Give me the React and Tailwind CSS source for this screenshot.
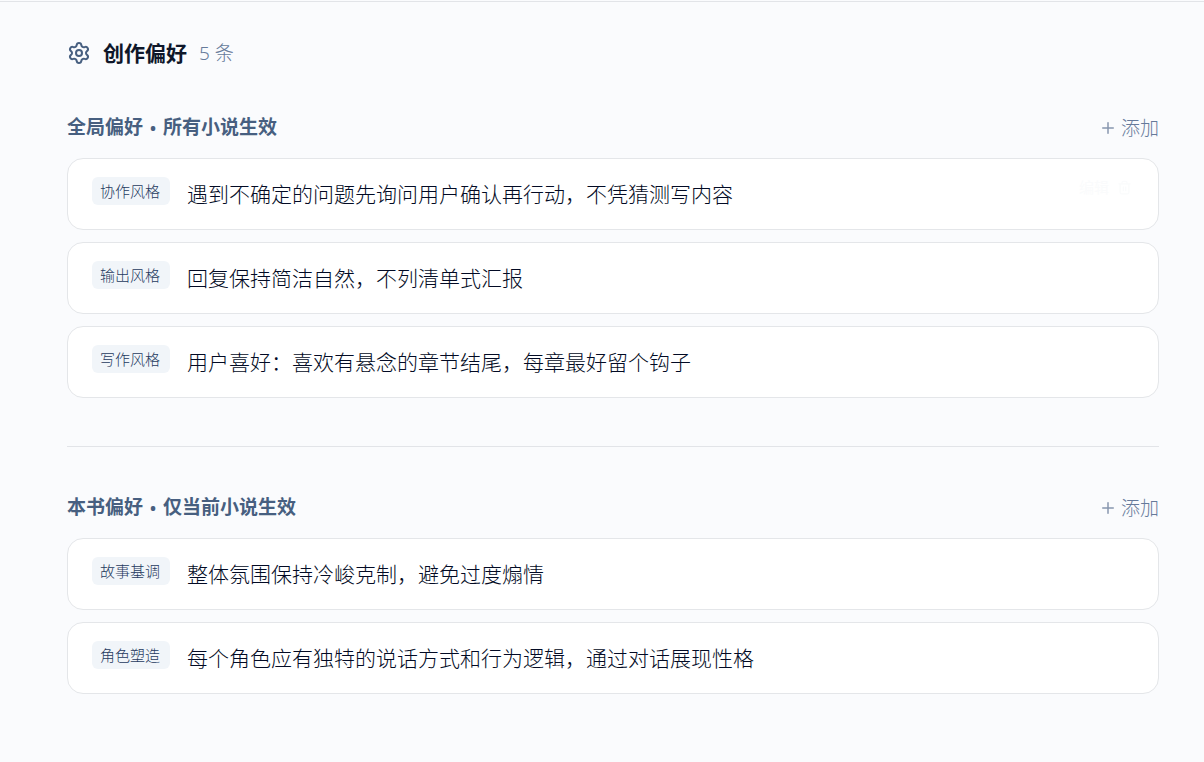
import { Settings, Plus, Trash2 } from "lucide-react";

const sections = [
  {
    id: "global",
    scope: "全局偏好",
    effect: "所有小说生效",
    items: [
      { tag: "协作风格", text: "遇到不确定的问题先询问用户确认再行动，不凭猜测写内容", active: true },
      { tag: "输出风格", text: "回复保持简洁自然，不列清单式汇报" },
      { tag: "写作风格", text: "用户喜好：喜欢有悬念的章节结尾，每章最好留个钩子" },
    ],
  },
  {
    id: "book",
    scope: "本书偏好",
    effect: "仅当前小说生效",
    items: [
      { tag: "故事基调", text: "整体氛围保持冷峻克制，避免过度煽情" },
      { tag: "角色塑造", text: "每个角色应有独特的说话方式和行为逻辑，通过对话展现性格" },
    ],
  },
];

function PreferenceCard({ item }) {
  return (
    <li className="flex items-start rounded-2xl border border-[#e4e6e9] bg-white px-6 py-[18px]">
      <span className="mr-[17px] shrink-0 rounded-md bg-[#f1f5f9] pr-[10px] pl-2 text-[15px] leading-7 font-light text-[#1f3a5f]">
        {item.tag}
      </span>
      <p className="min-w-0 flex-1 text-[21px] leading-[34px] font-light text-[#020a24]">{item.text}</p>
      {item.active && (
        <div className="flex items-center gap-2 pr-0.5 text-[#fafbfc]">
          <button type="button" className="text-[15px] leading-5">编辑</button>
          <button type="button" aria-label="删除">
            <Trash2 size={15} />
          </button>
        </div>
      )}
    </li>
  );
}

function PreferenceSection({ section }) {
  return (
    <section aria-labelledby={section.id}>
      <div className="mb-4 flex items-center justify-between">
        <h2 id={section.id} className="text-[19px] leading-7 font-bold text-[#475f80]">
          {section.scope} <span className="mx-0.5 text-[16px]">•</span> {section.effect}
        </h2>
        <button type="button" className="flex items-center gap-1 text-[19px] leading-7 font-light text-[#667a9a]">
          <Plus size={18} strokeWidth={2} className="text-[#8796ae]" />
          添加
        </button>
      </div>
      <ul className="flex flex-col gap-3">
        {section.items.map((item) => (
          <PreferenceCard key={item.tag} item={item} />
        ))}
      </ul>
    </section>
  );
}

export default function App() {
  return (
    <div className="min-h-screen bg-[#fafbfd] pt-px font-['Noto_Sans','Noto_Sans_CJK_SC',sans-serif]">
      <main className="border-t border-[#e2e4e8] pr-[45px] pb-12 pl-[67px]">
        <header className="flex items-center gap-3 pt-[35px] pb-11">
          <Settings size={24} className="text-[#475f80]" />
          <h1 className="text-[21px] leading-8 font-bold text-[#0f172a]">创作偏好</h1>
          <span className="text-[19px] leading-8 font-light text-[#667a9a]">5 条</span>
        </header>
        <PreferenceSection section={sections[0]} />
        <hr className="mt-12 mb-[46px] border-[#e2e4e8]" />
        <PreferenceSection section={sections[1]} />
      </main>
    </div>
  );
}
